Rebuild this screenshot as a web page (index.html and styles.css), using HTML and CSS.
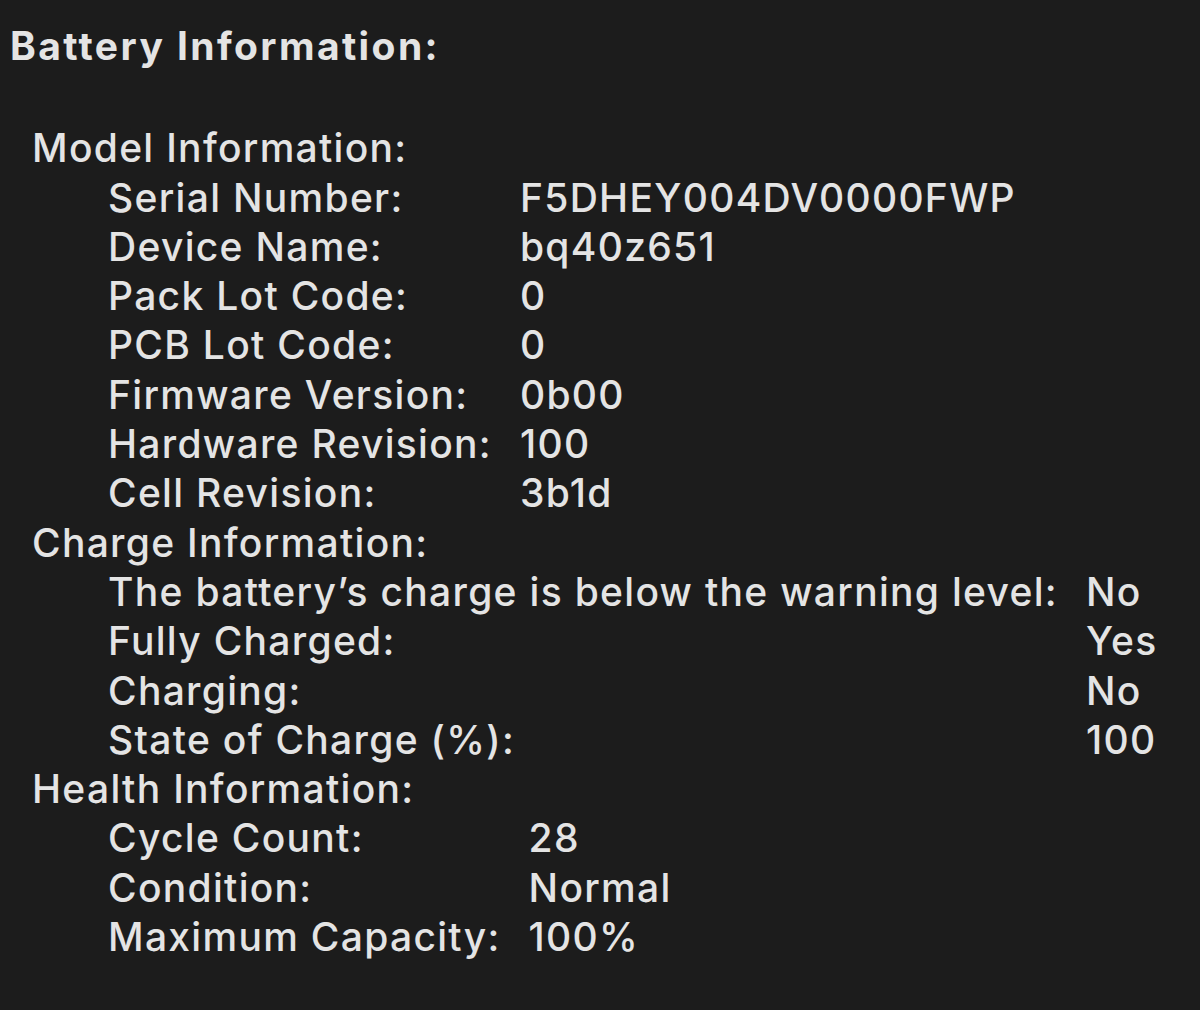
FILE: index.html
```html
<!DOCTYPE html>
<html>
<head>
<meta charset="utf-8">
<link rel="stylesheet" href="styles.css">
</head>
<body>
<div class="panel">
  <div class="title">Battery Information:</div>
  <div class="section">
    <div class="heading">Model Information:</div>
    <div class="grid">
      <div class="label">Serial Number:</div><div class="value">F5DHEY004DV0000FWP</div>
      <div class="label">Device Name:</div><div class="value">bq40z651</div>
      <div class="label">Pack Lot Code:</div><div class="value">0</div>
      <div class="label">PCB Lot Code:</div><div class="value">0</div>
      <div class="label">Firmware Version:</div><div class="value">0b00</div>
      <div class="label">Hardware Revision:</div><div class="value">100</div>
      <div class="label">Cell Revision:</div><div class="value">3b1d</div>
    </div>
  </div>
  <div class="section">
    <div class="heading">Charge Information:</div>
    <div class="grid">
      <div class="label">The battery’s charge is below the warning level:</div><div class="value">No</div>
      <div class="label">Fully Charged:</div><div class="value">Yes</div>
      <div class="label">Charging:</div><div class="value">No</div>
      <div class="label">State of Charge (%):</div><div class="value">100</div>
    </div>
  </div>
  <div class="section">
    <div class="heading">Health Information:</div>
    <div class="grid">
      <div class="label">Cycle Count:</div><div class="value">28</div>
      <div class="label">Condition:</div><div class="value">Normal</div>
      <div class="label">Maximum Capacity:</div><div class="value">100%</div>
    </div>
  </div>
</div>
</body>
</html>
```
FILE: styles.css
```css
html, body {
  margin: 0;
  padding: 0;
  background: #1c1c1c;
}
body {
  width: 1200px;
  height: 1010px;
  overflow: hidden;
  font-family: Inter, "Noto Sans", sans-serif;
  font-size: 39px;
  font-weight: 500;
  letter-spacing: 1.3px;
  line-height: 49.3px;
  color: #e4e4e4;
}
.panel {
  padding: 21px 0 0 10px;
}
.title {
  font-weight: 700;
  letter-spacing: 2.4px;
  margin-bottom: 53px;
}
.heading {
  padding-left: 22px;
}
.grid {
  display: grid;
  grid-template-columns: max-content max-content;
  column-gap: 28px;
  padding-left: 98px;
}
```
